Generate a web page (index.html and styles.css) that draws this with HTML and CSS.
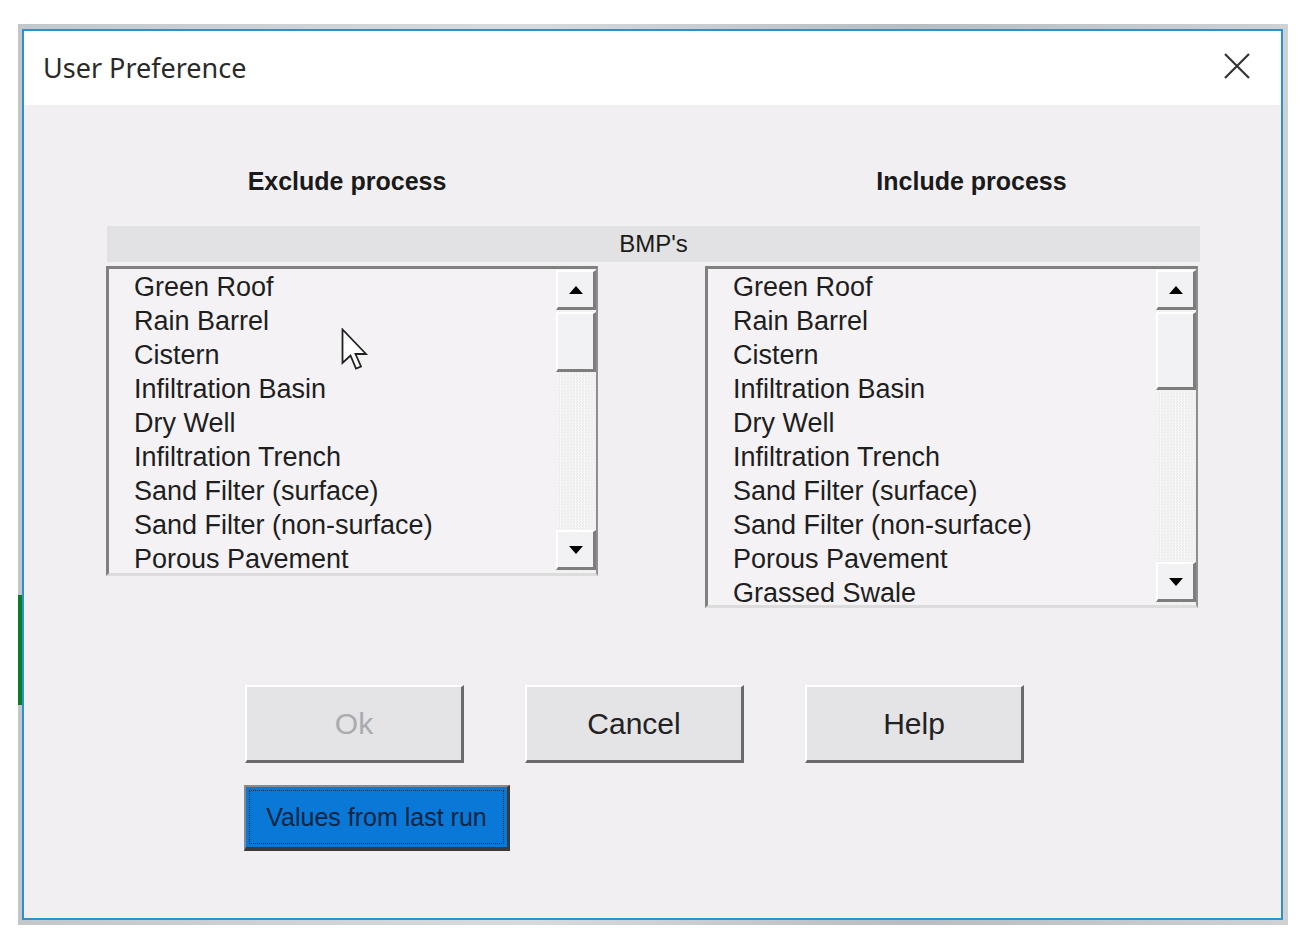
FILE: index.html
```html
<!DOCTYPE html>
<html>
<head>
<meta charset="utf-8">
<link rel="stylesheet" href="styles.css">
</head>
<body>
<div class="desktop">
  <div class="green-strip"></div>
  <div class="dialog">
    <div class="titlebar">
      <span class="title">User Preference</span>
      <svg class="close" width="28" height="28" viewBox="0 0 28 28"><path d="M2 2 L26 26 M26 2 L2 26" stroke="#333" stroke-width="2.2" fill="none"/></svg>
    </div>
    <div class="body">
      <div class="grid heads">
        <div class="head head-left">Exclude process</div>
        <div></div>
        <div class="head head-right">Include process</div>
      </div>
      <div class="bmp">BMP's</div>
      <div class="grid lists">
        <div class="list list-left">
          <ul class="items">
            <li>Green Roof</li>
            <li>Rain Barrel</li>
            <li>Cistern</li>
            <li>Infiltration Basin</li>
            <li>Dry Well</li>
            <li>Infiltration Trench</li>
            <li>Sand Filter (surface)</li>
            <li>Sand Filter (non-surface)</li>
            <li>Porous Pavement</li>
          </ul>
          <div class="scroll">
            <div class="sbtn"><span class="tri up"></span></div>
            <div class="thumb thumb-left"></div>
            <div class="track"></div>
            <div class="sbtn"><span class="tri down"></span></div>
          </div>
          <svg class="cursor" width="28" height="44" viewBox="0 0 28 44"><path d="M1.5 1.5 L1.5 35 L9.5 27.5 L15 40.5 L20 38.5 L14.5 26 L25 26 Z" fill="#fff" stroke="#222" stroke-width="1.8" stroke-linejoin="miter"/></svg>
        </div>
        <div></div>
        <div class="list list-right">
          <ul class="items">
            <li>Green Roof</li>
            <li>Rain Barrel</li>
            <li>Cistern</li>
            <li>Infiltration Basin</li>
            <li>Dry Well</li>
            <li>Infiltration Trench</li>
            <li>Sand Filter (surface)</li>
            <li>Sand Filter (non-surface)</li>
            <li>Porous Pavement</li>
            <li>Grassed Swale</li>
          </ul>
          <div class="scroll">
            <div class="sbtn"><span class="tri up"></span></div>
            <div class="thumb thumb-right"></div>
            <div class="track"></div>
            <div class="sbtn"><span class="tri down"></span></div>
          </div>
        </div>
      </div>
      <div class="buttons">
        <button class="btn disabled">Ok</button>
        <button class="btn">Cancel</button>
        <button class="btn">Help</button>
      </div>
      <div class="lastrow">
        <button class="btn-blue"><span class="focus">Values from last run</span></button>
      </div>
    </div>
  </div>
</div>
</body>
</html>
```
FILE: styles.css
```css
html, body {
  margin: 0;
  padding: 0;
  background: #ffffff;
}
body {
  width: 1309px;
  height: 945px;
  overflow: hidden;
  font-family: "Liberation Sans", Arial, sans-serif;
}
.desktop {
  position: relative;
  margin: 24px 0 0 18px;
  width: 1270px;
  height: 901px;
  box-sizing: border-box;
  padding: 5px 5px 5px 4px;
  background: linear-gradient(to right, #c4c7ca, #d9dadc 40%, #b9bcc0 70%, #cfd1d3);
}
.green-strip {
  position: absolute;
  left: 0;
  top: 571px;
  width: 4px;
  height: 110px;
  background: #0b7a2a;
}
.dialog {
  width: 1261px;
  height: 891px;
  box-sizing: border-box;
  border: 2px solid #2a93cf;
  display: flex;
  flex-direction: column;
  background: #f1eff2;
}
.titlebar {
  height: 74px;
  flex: none;
  background: #ffffff;
  display: flex;
  align-items: center;
  justify-content: space-between;
  padding: 0 30px 0 19px;
}
.title {
  font-family: "Noto Sans", "Open Sans", sans-serif;
  font-size: 27px;
  color: #2a2a2a;
  margin-top: -2px;
}
.close {
  margin-top: -4px;
}
.body {
  flex: 1;
  padding: 61px 0 0 82px;
}
.grid {
  display: grid;
  grid-template-columns: 492px 107px 493px;
  width: 1094px;
}
.head {
  font-weight: bold;
  font-size: 25px;
  color: #1a1a1a;
  line-height: 30px;
  text-align: center;
}
.head-left { padding-right: 10px; }
.head-right { padding-left: 40px; }
.bmp {
  margin-top: 30px;
  margin-left: 1px;
  width: 1093px;
  height: 36px;
  background: #e2e1e3;
  text-align: center;
  font-size: 24px;
  line-height: 36px;
  color: #1a1a1a;
}
.lists {
  margin-top: 4px;
  align-items: start;
}
.list {
  position: relative;
  display: flex;
  box-sizing: border-box;
  border-top: 3px solid #808080;
  border-left: 3px solid #808080;
  border-right: 2px solid #8f8f8f;
  border-bottom: 3px solid #dcdcdc;
  background: #f4f2f5;
}
.list-left { height: 310px; }
.list-right { height: 342px; }
.items {
  list-style: none;
  margin: 0;
  padding: 0 0 0 25px;
  flex: 1;
}
.items li {
  font-size: 27px;
  line-height: 28px;
  height: 34px;
  box-sizing: border-box;
  padding-top: 4px;
  color: #1e1e1e;
  white-space: nowrap;
}
.scroll {
  width: 40px;
  flex: none;
  display: flex;
  flex-direction: column;
  padding: 1px 0 3px 0;
  background: repeating-conic-gradient(#f6f6f6 0 25%, #ececec 0 50%) 0 0 / 3px 3px;
}
.sbtn {
  height: 40px;
  flex: none;
  box-sizing: border-box;
  background: #f2f1f3;
  border-top: 2px solid #ffffff;
  border-left: 2px solid #ffffff;
  border-right: 3px solid #7d7d7d;
  border-bottom: 3px solid #7d7d7d;
  display: flex;
  align-items: center;
  justify-content: center;
}
.tri {
  width: 0;
  height: 0;
  border-left: 7px solid transparent;
  border-right: 7px solid transparent;
}
.tri.up { border-bottom: 8px solid #000; }
.tri.down { border-top: 8px solid #000; }
.thumb {
  flex: none;
  box-sizing: border-box;
  background: #f2f1f3;
  border-top: 2px solid #ffffff;
  border-left: 2px solid #ffffff;
  border-right: 3px solid #7d7d7d;
  border-bottom: 3px solid #7d7d7d;
  margin-top: 2px;
}
.thumb-left { height: 60px; }
.thumb-right { height: 78px; }
.track { flex: 1; }
.cursor {
  position: absolute;
  left: 232px;
  top: 59px;
}
.buttons {
  display: flex;
  gap: 61px;
  padding-left: 139px;
  margin-top: 77px;
}
.btn {
  width: 219px;
  height: 78px;
  box-sizing: border-box;
  background: #e4e3e5;
  border-top: 2px solid #ffffff;
  border-left: 2px solid #ffffff;
  border-right: 3px solid #6a6a6a;
  border-bottom: 3px solid #6a6a6a;
  font-family: "Liberation Sans", Arial, sans-serif;
  font-size: 30px;
  color: #222;
  padding: 0;
}
.btn.disabled {
  color: #a9abb0;
}
.lastrow {
  padding-left: 138px;
  margin-top: 22px;
}
.btn-blue {
  width: 266px;
  height: 66px;
  box-sizing: border-box;
  background: #0a78d6;
  border-top: 2px solid #8a8a8a;
  border-left: 2px solid #8a8a8a;
  border-right: 3px solid #3a3a3a;
  border-bottom: 4px solid #3a3a3a;
  padding: 3px;
  font-family: "Liberation Sans", Arial, sans-serif;
  font-size: 25px;
  color: #0c2440;
}
.focus {
  display: flex;
  align-items: center;
  justify-content: center;
  height: 100%;
  box-sizing: border-box;
  border: 1px dotted #0c2440;
  white-space: nowrap;
}
```
